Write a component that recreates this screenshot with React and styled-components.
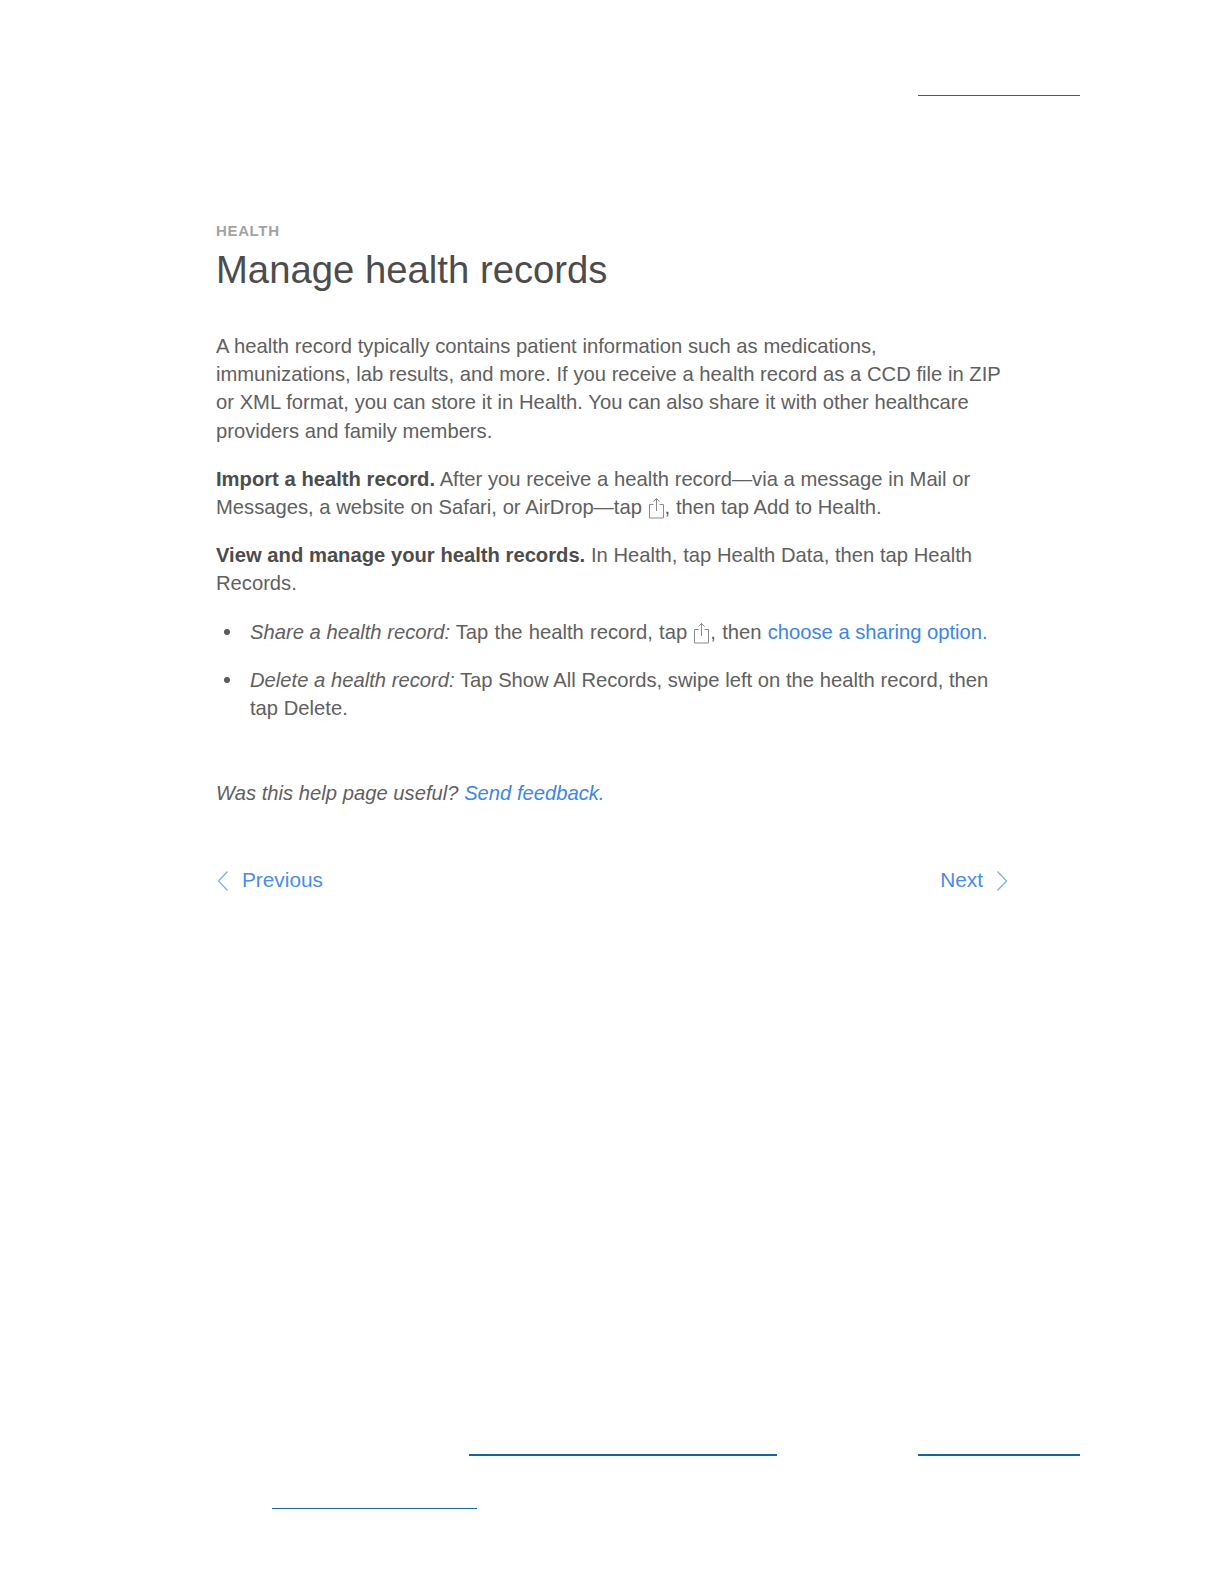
import styled, { createGlobalStyle } from "styled-components"

const GlobalStyle = createGlobalStyle`
    html, body {
        margin: 0;
        padding: 0;
        background-color: white;
    }
    body {
        font-family: "Liberation Sans", Arial, sans-serif;
    }
`
const Page = styled.div`
    width: 1224px;
    height: 1584px;
    display: flex;
    flex-direction: column;
    padding-top: 95px;
    box-sizing: border-box;
`
const RuleRow = styled.div`
    display: flex;
    padding-left: ${(props) => props.$left}px;
    margin-top: ${(props) => props.$top || 0}px;
`
const Rule = styled.div`
    width: ${(props) => props.$width}px;
    height: ${(props) => props.$thick || 1}px;
    margin-right: ${(props) => props.$gap || 0}px;
    background-color: #1565a0;
`
const Article = styled.div`
    width: 792px;
    margin: 126px 0 0 216px;
    color: #606060;
    font-size: 20.2px;
    line-height: 28.2px;
    word-spacing: 0.1px;
`
const Eyebrow = styled.div`
    font-size: 15px;
    line-height: 18px;
    font-weight: bold;
    letter-spacing: 0.65px;
    color: #a3a3a3;
    margin-bottom: 5px;
`
const Title = styled.h1`
    margin: 0 0 37px;
    font-size: 38.25px;
    line-height: 50px;
    font-weight: normal;
    color: #4c4c4c;
`
const Para = styled.p`
    margin: 0 0 20px;
`
const Lead = styled.b`
    color: #4c4c4c;
`
const Bullets = styled.ul`
    margin: 0;
    padding: 0 0 0 34px;
    list-style: none;
`
const Bullet = styled.li`
    position: relative;
    margin-bottom: 20px;

    &::before {
        content: "";
        position: absolute;
        left: -26px;
        top: 11px;
        width: 6px;
        height: 6px;
        border-radius: 50%;
        background-color: #5a5a5a;
    }
`
const Spread = styled.span`
    word-spacing: 0.6px;
`
const Link = styled.a`
    color: #3d85e6;
    word-spacing: 0;
`
const Feedback = styled.p`
    margin: 57px 0 0;
    font-style: italic;
`
const NavRow = styled.div`
    display: flex;
    justify-content: space-between;
    margin-top: 59px;
    color: #4a8cec;
    font-size: 20.8px;
`
const NavLink = styled.div`
    display: flex;
    align-items: center;
    gap: ${(props) => props.$gap}px;
`

const ShareIcon = () => (
    <svg width="17" height="22" viewBox="0 0 17 22" fill="none" stroke="#8a8a8a" strokeWidth="1" style={{ verticalAlign: "-5px" }}>
        <path d="M5.5 7.5H1.5V21H15.5V7.5H11.5" />
        <path d="M8.5 14V1.5M5.5 4.5L8.5 1.5L11.5 4.5" />
    </svg>
)

const Chevron = ({ flip }) => (
    <svg width="12" height="22" viewBox="0 0 12 22" fill="none" stroke="#7fb0f0" strokeWidth="1.3">
        <path d={flip ? "M1.5 1.5L10.5 11L1.5 20.5" : "M11.5 1.5L2.5 11L11.5 20.5"} />
    </svg>
)

export default function App() {
    return (
        <Page>
            <GlobalStyle />
            <RuleRow $left={918}>
                <Rule $width={162} />
            </RuleRow>
            <Article>
                <Eyebrow>HEALTH</Eyebrow>
                <Title>Manage health records</Title>
                <Para>
                    A health record typically contains patient information such as medications, immunizations, lab results, and more. If you receive a health record as a CCD file in ZIP or XML format, you can store it in Health. You can also share it with other healthcare providers and family members.
                </Para>
                <Para>
                    <Lead>Import a health record.</Lead> After you receive a health record—via a message in Mail or Messages, a website on Safari, or AirDrop—tap <ShareIcon />, then tap Add to Health.
                </Para>
                <Para>
                    <Lead>View and manage your health records.</Lead> In Health, tap Health Data, then tap Health Records.
                </Para>
                <Bullets>
                    <Bullet>
                        <i>Share a health record:</i> <Spread>Tap the health record, tap <ShareIcon />, then <Link>choose a sharing option.</Link></Spread>
                    </Bullet>
                    <Bullet>
                        <i>Delete a health record:</i> Tap Show All Records, swipe left on the health record, then tap Delete.
                    </Bullet>
                </Bullets>
                <Feedback>
                    Was this help page useful? <Link>Send feedback.</Link>
                </Feedback>
                <NavRow>
                    <NavLink $gap={14}><Chevron /> Previous</NavLink>
                    <NavLink $gap={13}>Next <Chevron flip /></NavLink>
                </NavRow>
            </Article>
            <RuleRow $left={469} $top={559}>
                <Rule $width={308} $thick={2} $gap={141} />
                <Rule $width={162} $thick={2} />
            </RuleRow>
            <RuleRow $left={272} $top={52}>
                <Rule $width={205} />
            </RuleRow>
        </Page>
    )
}
